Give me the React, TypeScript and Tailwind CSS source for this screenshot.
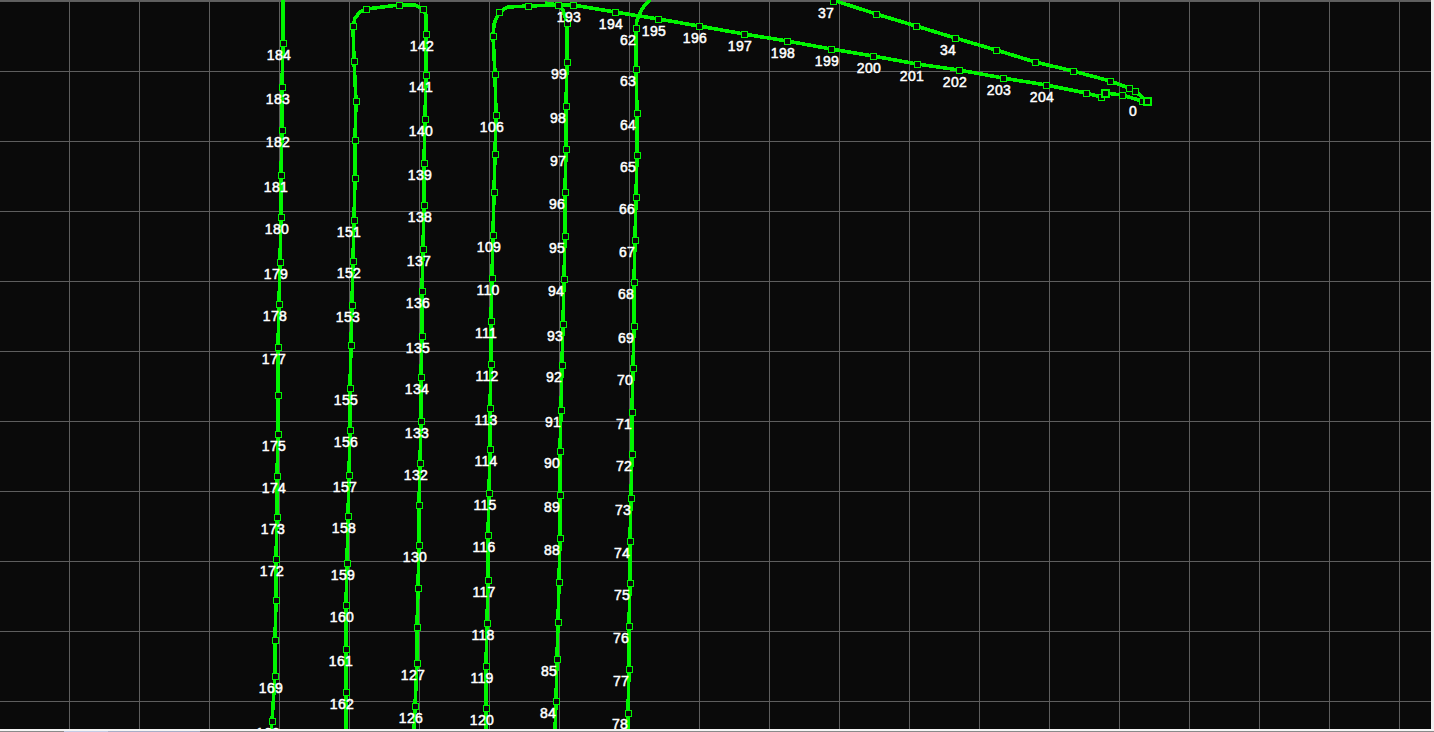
const colA = "283,0 283,43 282,87 282,130 281,175 281,217 280,262 279,304 278,347 278,395 278,434 277,476 277,517 276,559 276,600 275,640 275,676 272,721 271,732";
const colB = "346,732 346,692 346,649 346,605 347,563 348,516 349,475 350,430 350,388 351,345 352,305 353,261 354,220 355,178 355,140 356,101 354,61 353,26 355,18 360,12 366,9 399,5 415,5 423,9 426,15 426,34 426,75 425,119 424,163 424,205 423,249 422,291 422,336 421,377 421,421 420,463 419,505 419,545 418,588 417,627 417,663 415,706 414,732";
const colC = "486,732 486,708 486,666 487,623 488,580 488,535 489,493 490,449 490,408 491,364 491,321 492,278 493,235 494,192 495,154 496,115 495,74 493,36 494,24 499,12 508,7 528,6 558,5 563,10 567,23 567,62 566,106 566,149 565,192 565,236 564,279 563,324 562,365 561,410 560,451 560,495 560,538 559,582 558,622 557,659 556,701 555,732";
const colD = "650,0 644,6 640,13 637,20 636,28 636,69 637,113 637,155 636,197 635,240 634,282 634,326 633,368 632,412 632,454 631,498 630,541 630,583 629,626 629,669 628,713 628,732";
const lineA = "545,3 558,5 573,5 615,12 658,19 699,26 744,34 787,41 831,49 873,56 917,64 959,70 1003,78 1046,85 1086,93 1101,97 1105,93 1122,95 1142,101 1147,101";
const lineB = "833,0 876,14 916,26 955,38 996,50 1035,62 1073,71 1110,81 1129,88 1135,91 1142,97 1147,101";

const nodes = [
  [283,43],[282,87],[282,130],[281,175],[281,217],[280,262],[279,304],[278,347],[278,395],[278,434],[277,476],[277,517],[276,559],[276,600],[275,640],[275,676],[272,721],
  [346,692],[346,649],[346,605],[347,563],[348,516],[349,475],[350,430],[350,388],[351,345],[352,305],[353,261],[354,220],[355,178],[355,140],[356,101],[354,61],[353,26],[366,9],[399,5],[423,9],[426,34],[426,75],[425,119],[424,163],[424,205],[423,249],[422,291],[422,336],[421,377],[421,421],[420,463],[419,505],[419,545],[418,588],[417,627],[417,663],[415,706],
  [486,708],[486,666],[487,623],[488,580],[488,535],[489,493],[490,449],[490,408],[491,364],[491,321],[492,278],[493,235],[494,192],[495,154],[496,115],[495,74],[493,36],[499,12],[528,6],[558,5],[567,23],[567,62],[566,106],[566,149],[565,192],[565,236],[564,279],[563,324],[562,365],[561,410],[560,451],[560,495],[560,538],[559,582],[558,622],[557,659],[556,701],
  [636,28],[636,69],[637,113],[637,155],[636,197],[635,240],[634,282],[634,326],[633,368],[632,412],[632,454],[631,498],[630,541],[630,583],[629,626],[629,669],[628,713],
  [573,5],[615,12],[658,19],[699,26],[744,34],[787,41],[831,49],[873,56],[917,64],[959,70],[1003,78],[1046,85],[1086,93],[1101,97],[1122,95],[1142,101],
  [833,1],[876,14],[916,26],[955,38],[996,50],[1035,62],[1073,71],[1110,81],[1129,88],[1135,91],
];
const bigNodes = [[1105,93],[1147,101]];

const labels: [string, number, number][] = [
  ["184",279,55],["183",278,99],["182",278,142],["181",276,187],["180",277,229],["179",276,274],["178",275,316],["177",274,359],["175",274,446],["174",274,488],["173",273,529],["172",272,571],["169",271,688],["168",268,733],
  ["151",349,232],["152",349,273],["153",348,317],["155",346,400],["156",346,442],["157",345,487],["158",344,528],["159",343,575],["160",342,617],["161",341,661],["162",342,704],
  ["142",422,46],["141",421,87],["140",421,131],["139",420,175],["138",420,217],["137",419,261],["136",418,303],["135",418,348],["134",417,389],["133",417,433],["132",416,475],["130",415,557],["127",413,675],["126",411,718],
  ["106",492,127],["109",489,247],["110",488,290],["111",486,333],["112",487,376],["113",486,420],["114",486,461],["115",485,505],["116",484,547],["117",484,592],["118",483,635],["119",482,678],["120",482,720],
  ["193",569,17],["99",559,74],["98",558,118],["97",558,161],["96",557,204],["95",557,248],["94",556,291],["93",555,336],["92",554,377],["91",553,422],["90",552,463],["89",552,507],["88",552,550],["85",549,671],["84",548,713],
  ["62",628,40],["63",628,81],["64",628,125],["65",628,167],["66",627,209],["67",627,252],["68",626,294],["69",626,338],["70",625,380],["71",624,424],["72",624,466],["73",623,510],["74",622,553],["75",622,595],["76",621,638],["77",621,681],["78",620,724],
  ["194",611,24],["195",654,31],["196",695,38],["197",740,46],["198",783,53],["199",827,61],["200",869,68],["201",912,76],["202",955,82],["203",999,90],["204",1042,97],["0",1133,111],["37",826,13],["34",948,50],
];

const vLines = Array.from({ length: 20 }, (_, i) => 69 + 70 * i);
const hLines = Array.from({ length: 11 }, (_, i) => 1 + 70 * i);

export default function App() {
  return (
    <div className="flex h-[732px] w-[1434px] flex-col overflow-hidden bg-[#f0f0f0]">
      <div className="flex h-[729px] w-full">
        <div className="relative h-[729px] w-[1431px] overflow-hidden bg-[#0a0a0a]">
          <svg width="1431" height="729" className="absolute left-0 top-0">
            <rect x="0" y="0" width="1431" height="1" fill="#606060" />
            {vLines.map((x) => (
              <rect key={x} x={x} y="0" width="1" height="729" fill="#5e5e5e" />
            ))}
            {hLines.map((y) => (
              <rect key={y} x="0" y={y} width="1431" height="1" fill="#5e5e5e" />
            ))}
            {[colA, colB, colC, colD, lineA, lineB].map((pts, i) => (
              <polyline key={i} points={pts} fill="none" stroke="#00f500" strokeWidth="3.6" strokeLinejoin="round" shapeRendering="crispEdges" />
            ))}
            {nodes.map(([x, y], i) => (
              <g key={i}>
                <rect x={x - 3} y={y - 3} width="7" height="7" fill="#00f500" />
                <rect x={x - 2} y={y - 2} width="5" height="5" fill="#0a0a0a" />
              </g>
            ))}
            {bigNodes.map(([x, y], i) => (
              <g key={i}>
                <rect x={x - 4} y={y - 4} width="9" height="9" fill="#00f500" />
                <rect x={x - 2} y={y - 2} width="5" height="5" fill="#0a0a0a" />
              </g>
            ))}
          </svg>
          {labels.map(([t, x, y]) => (
            <span
              key={t}
              className="absolute -translate-x-1/2 -translate-y-1/2 font-['Liberation_Sans',Arial,sans-serif] text-[14px] font-normal leading-none tracking-[0.3px] text-white [-webkit-text-stroke:0.5px_white]"
              style={{ left: x, top: y }}
            >
              {t}
            </span>
          ))}
        </div>
        <div className="h-full w-[3px] bg-[#f0f0f0]" />
      </div>
      <div className="flex h-[3px] w-full flex-col">
        <div className="h-[2px] w-full bg-[#f4f4f4]" />
        <div className="flex h-[1px] w-full bg-[#8a8a8a]">
          <div className="ml-[64px] h-full w-[44px] bg-[#c4cce6]" />
          <div className="h-full w-[92px] bg-[#a8aec8]" />
        </div>
      </div>
    </div>
  );
}
